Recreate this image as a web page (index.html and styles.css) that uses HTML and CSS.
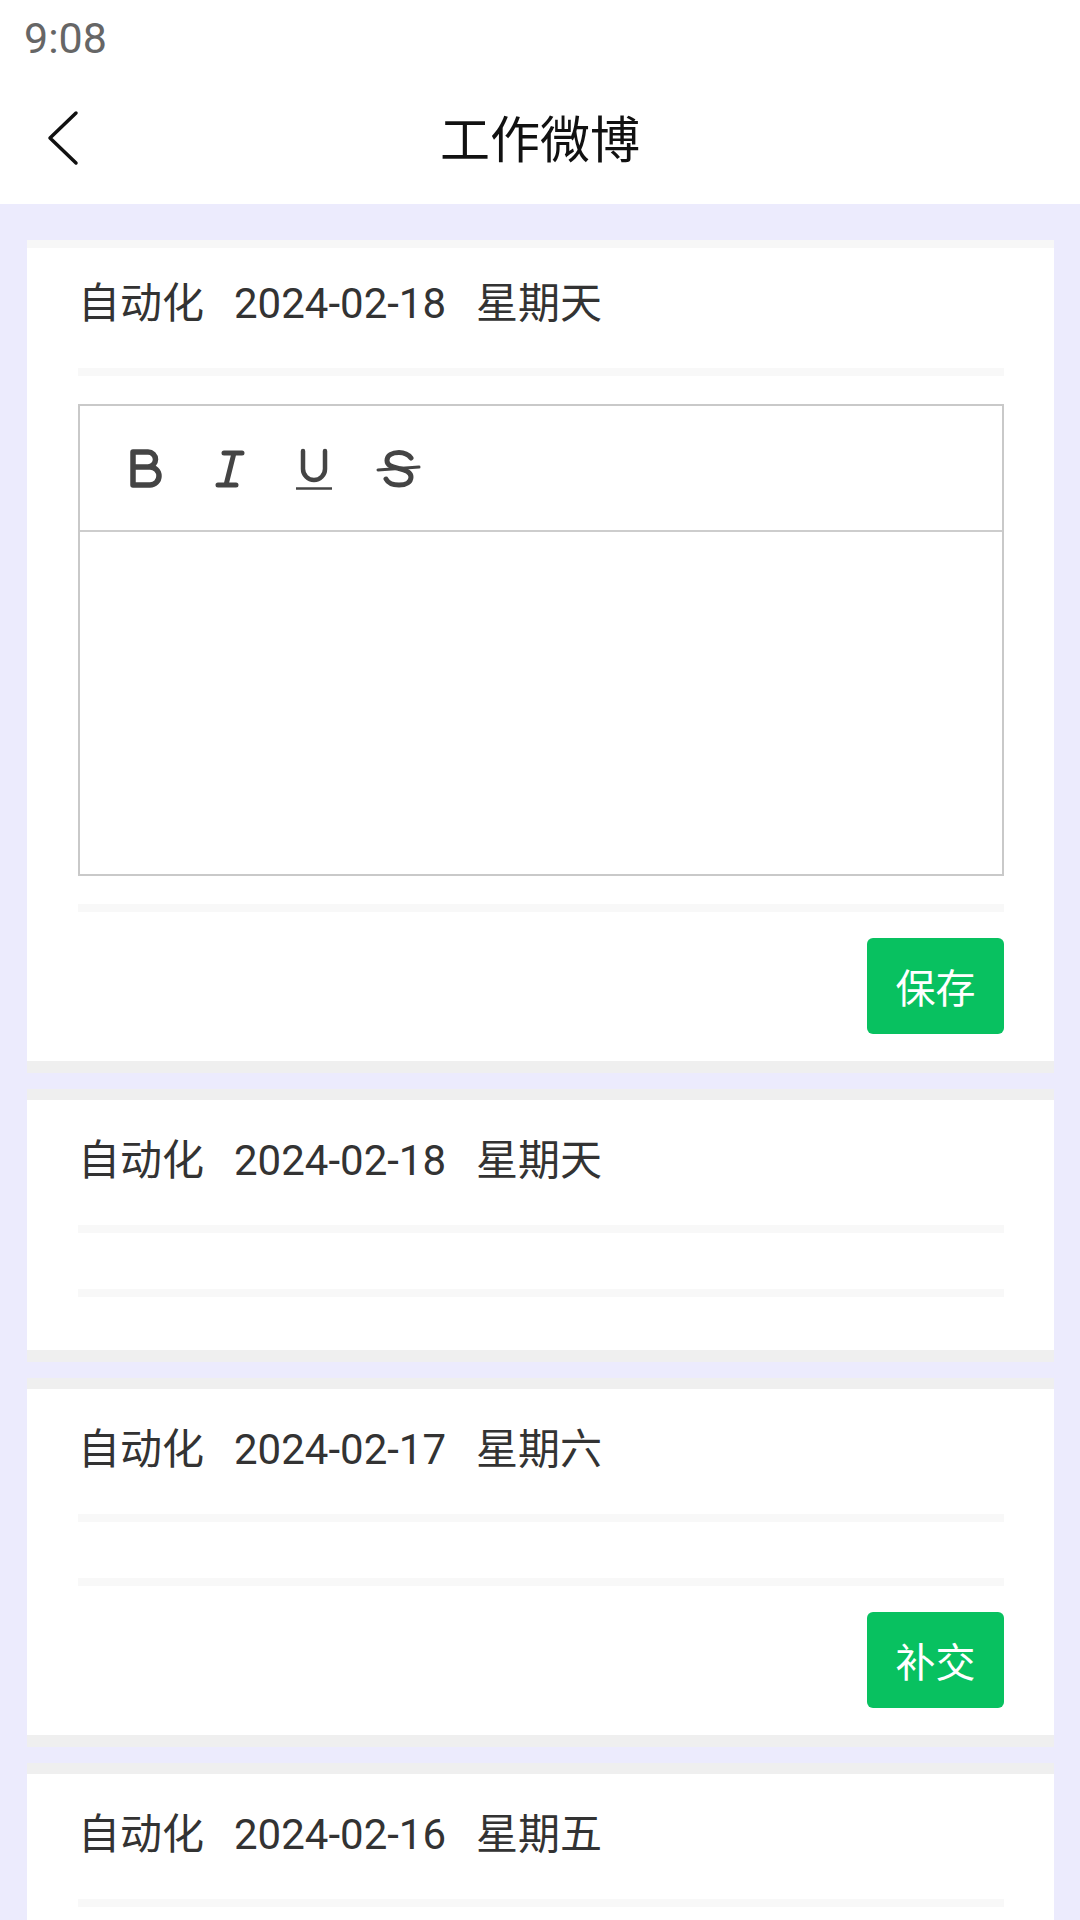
FILE: index.html
```html
<!DOCTYPE html>
<html lang="zh-CN">
<head>
<meta charset="utf-8">
<title>工作微博</title>
<link rel="stylesheet" href="styles.css">
</head>
<body>
<header class="header">
  <div class="status">9:08</div>
  <div class="nav">
    <svg class="back" width="44" height="60" viewBox="0 0 44 60"><path d="M36 5 L10 30 L36 55" fill="none" stroke="#111" stroke-width="3.5" stroke-linecap="round" stroke-linejoin="round"/></svg>
    <h1 class="title">工作微博</h1>
  </div>
</header>
<main class="list">
  <section class="card card-first">
    <div class="card-title"><span class="seg">自动化</span><span class="seg">2024-02-18</span><span>星期天</span></div>
    <div class="divider"></div>
    <div class="content">
      <div class="editor">
        <div class="toolbar">
          <span class="tool"><svg width="48" height="48" viewBox="0 0 48 48"><path d="M11 8 H26 A7.5 7.5 0 0 1 26 23 H11 Z M11 23 H28 A9 9 0 0 1 28 41 H11 Z" fill="none" stroke="#444" stroke-width="5.5" stroke-linejoin="round"/></svg></span>
          <span class="tool"><svg width="48" height="48" viewBox="0 0 48 48"><path d="M18 9 H36 M12 41 H30 M28 9 L20 41" fill="none" stroke="#444" stroke-width="5" stroke-linecap="round"/></svg></span>
          <span class="tool"><svg width="48" height="48" viewBox="0 0 48 48"><path d="M13 7 V25 A11 11 0 0 0 35 25 V7" fill="none" stroke="#444" stroke-width="4.5" stroke-linecap="round"/><path d="M6 44.5 H42" stroke="#444" stroke-width="2.5"/></svg></span>
          <span class="tool"><svg width="48" height="48" viewBox="0 0 48 48"><path d="M37 14 C34 10 30 8.5 25 8.5 C18 8.5 13 11.5 13 16.5 C13 22 19 23 25 24.5 C32 26 37 28 37 33 C37 38 32 41 25 41 C19 41 14 39 12 35" fill="none" stroke="#444" stroke-width="5" stroke-linecap="round"/><path d="M4 26 L45 23" stroke="#444" stroke-width="3" stroke-linecap="round"/></svg></span>
        </div>
        <div class="editor-body"></div>
      </div>
    </div>
    <div class="divider"></div>
    <div class="footer"><button class="btn">保存</button></div>
  </section>

  <section class="card">
    <div class="card-title"><span class="seg">自动化</span><span class="seg">2024-02-18</span><span>星期天</span></div>
    <div class="divider"></div>
    <div class="content"></div>
    <div class="divider"></div>
    <div class="footer"></div>
  </section>

  <section class="card">
    <div class="card-title"><span class="seg">自动化</span><span class="seg">2024-02-17</span><span>星期六</span></div>
    <div class="divider"></div>
    <div class="content"></div>
    <div class="divider"></div>
    <div class="footer"><button class="btn">补交</button></div>
  </section>

  <section class="card">
    <div class="card-title"><span class="seg">自动化</span><span class="seg">2024-02-16</span><span>星期五</span></div>
    <div class="divider"></div>
    <div class="content"></div>
    <div class="divider"></div>
    <div class="footer"></div>
  </section>
</main>
</body>
</html>
```

FILE: styles.css
```css
html, body {
  margin: 0;
  padding: 0;
}
body {
  width: 1080px;
  height: 1920px;
  overflow: hidden;
  background: #ecebfd;
  font-family: Roboto, "Noto Sans CJK SC", sans-serif;
}
.header {
  background: #fff;
  height: 204px;
  display: flex;
  flex-direction: column;
}
.status {
  height: 72px;
  box-sizing: border-box;
  padding: 14px 0 0 24px;
  font-size: 43px;
  line-height: 48px;
  font-weight: 400;
  color: #666;
}
.nav {
  flex: 1;
  display: flex;
  align-items: center;
  justify-content: center;
  padding-bottom: 4px;
  position: relative;
}
.back {
  position: absolute;
  left: 40px;
  top: 36px;
}
.title {
  margin: 0;
  font-family: "Noto Sans CJK SC", sans-serif;
  font-weight: 400;
  font-size: 50px;
  line-height: 64px;
  color: #111;
}
.list {
  padding-top: 36px;
  display: flex;
  flex-direction: column;
  gap: 16px;
}
.card {
  margin: 0 26px 0 27px;
  background: #fff;
  border-top: 11px solid #efefef;
  border-bottom: 12px solid #efefef;
  padding: 33px 50px 0 51px;
}
.card-first {
  border-top: 8px solid #f7f7f7;
  padding-top: 28px;
}
.card-title {
  font-size: 42px;
  line-height: 56px;
  color: #333;
  margin-bottom: 36px;
  white-space: nowrap;
}
.seg {
  margin-right: 30px;
}
.divider {
  height: 8px;
  background: #f8f8f8;
}
.content {
  padding: 28px 0;
}
.editor {
  border: 2px solid #c9c9c9;
  height: 472px;
  box-sizing: border-box;
  display: flex;
  flex-direction: column;
}
.toolbar {
  height: 124px;
  border-bottom: 2px solid #cdcdcd;
  display: flex;
  align-items: center;
  padding-left: 24px;
}
.tool {
  width: 84px;
  height: 124px;
  display: flex;
  align-items: center;
  justify-content: center;
}
.editor-body {
  flex: 1;
}
.footer {
  display: flex;
  justify-content: flex-end;
  padding: 26px 0 27px;
}
.btn {
  border: none;
  margin: 0;
  background: #08c160;
  color: #fff;
  height: 96px;
  width: 137px;
  border-radius: 6px;
  font-family: "Noto Sans CJK SC", sans-serif;
  font-size: 40px;
  line-height: 96px;
  padding: 0;
}
```
